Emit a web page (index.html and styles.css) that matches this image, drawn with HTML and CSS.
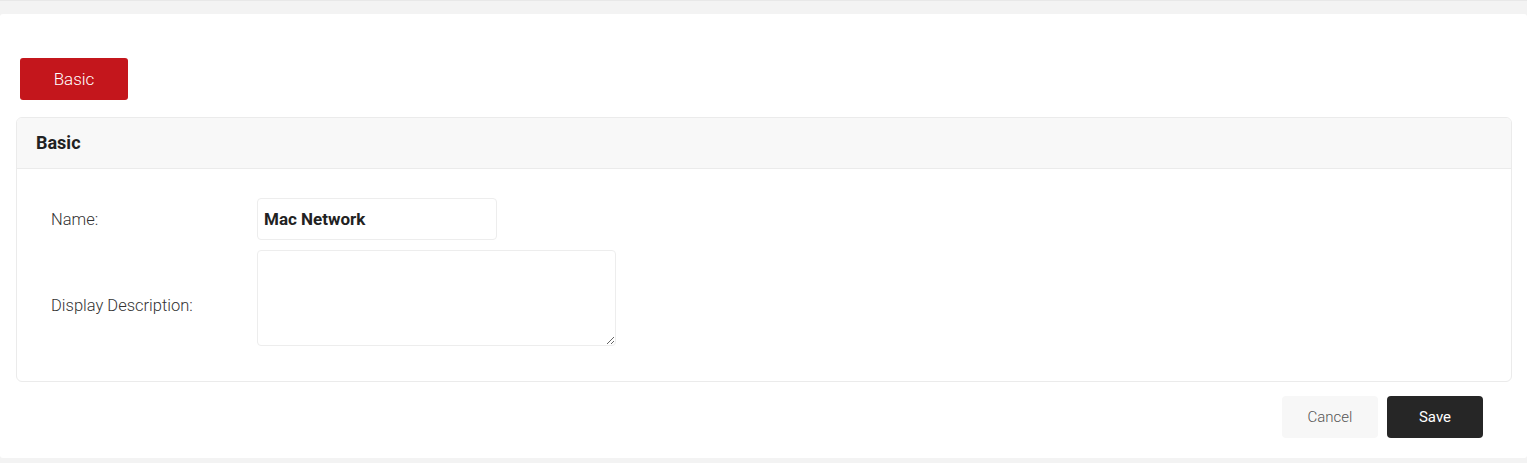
FILE: index.html
```html
<!DOCTYPE html>
<html lang="en">
<head>
    <meta charset="UTF-8">
    <meta name="viewport" content="width=device-width, initial-scale=1.0">
    <title>Network</title>
    <link rel="stylesheet" href="styles.css">
</head>
<body>
    <div id="page">
        <div id="card">
            <div class="tabs">
                <span class="tab active">Basic</span>
            </div>
            <div class="panel">
                <div class="panel-head">Basic</div>
                <div class="panel-body">
                    <div class="row">
                        <label class="label">Name:</label>
                        <input class="input" type="text" value="Mac Network">
                    </div>
                    <div class="row">
                        <label class="label label-low">Display Description:</label>
                        <textarea class="textarea"></textarea>
                    </div>
                </div>
            </div>
            <div class="actions">
                <button class="btn btn-cancel">Cancel</button>
                <button class="btn btn-save">Save</button>
            </div>
        </div>
    </div>
</body>
</html>
```

FILE: styles.css
```css
*{
    margin: 0;
    padding: 0;
    box-sizing: border-box;
}
body{
    background: #f3f3f3;
    font-family: Roboto, "Liberation Sans", Arial, sans-serif;
    color: #333333;
}
#page{
    padding-top: 13px;
    border-top: 1px solid #e8e8e8;
}
#card{
    background: #ffffff;
    border-radius: 3px;
    padding: 44px 15px 20px 16px;
}
.tabs{
    display: flex;
    padding-left: 4px;
    margin-bottom: 17px;
}
.tab{
    width: 108px;
    height: 42px;
    line-height: 42px;
    text-align: center;
    font-size: 17px;
    font-weight: 300;
    border-radius: 3px;
    color: #ffffff;
    background: #c4161c;
}
.panel{
    border: 1px solid #ebebeb;
    border-radius: 6px;
    overflow: hidden;
}
.panel-head{
    height: 51px;
    line-height: 50px;
    padding-left: 19px;
    background: #f8f8f8;
    border-bottom: 1px solid #ebebeb;
    font-size: 18px;
    font-weight: 700;
    color: #222222;
}
.panel-body{
    display: flex;
    flex-direction: column;
    gap: 10px;
    padding: 29px 0 35px 34px;
}
.row{
    display: flex;
    align-items: center;
}
.label{
    width: 206px;
    font-size: 16.5px;
    font-weight: 300;
    color: #333333;
}
.label-low{
    padding-top: 14px;
}
.input{
    width: 240px;
    height: 42px;
    padding: 0 6px;
    border: 1px solid #ededed;
    border-radius: 4px;
    font-family: inherit;
    font-size: 17px;
    font-weight: 700;
    color: #222222;
    outline: none;
}
.textarea{
    width: 359px;
    height: 96px;
    border: 1px solid #ededed;
    border-radius: 4px;
    outline: none;
    font-family: inherit;
}
.actions{
    display: flex;
    justify-content: flex-end;
    gap: 9px;
    padding-right: 29px;
    margin-top: 14px;
}
.btn{
    width: 96px;
    height: 42px;
    border: none;
    border-radius: 4px;
    font-family: inherit;
    font-size: 15px;
    cursor: pointer;
}
.btn-cancel{
    background: #f7f7f7;
    color: #555555;
    font-weight: 300;
}
.btn-save{
    background: #262626;
    color: #ffffff;
}
```
